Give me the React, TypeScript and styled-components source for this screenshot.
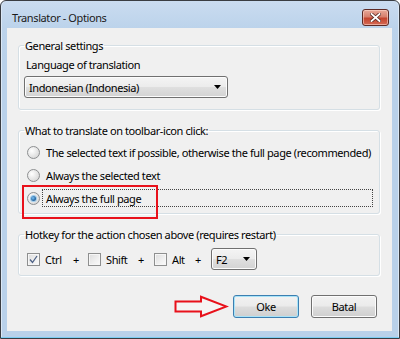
import React from "react";
import styled, { createGlobalStyle, css } from "styled-components";

const GlobalStyle = createGlobalStyle`
  html, body { margin: 0; padding: 0; background: #ffffff; }
  body { width: 400px; height: 339px; overflow: hidden; }
  * { box-sizing: border-box; }
`;

const FONT = `"Noto Sans", "Open Sans", "DejaVu Sans", sans-serif`;

const Window = styled.div`
  width: 400px;
  height: 339px;
  border: 1px solid #3a3d42;
  border-radius: 6px 6px 0 0;
  background: linear-gradient(180deg, #cadcf0 0px, #bcd3eb 27px, #b9d1ea 60px, #b9d1ea 100%);
  box-shadow: inset 0 -1px 0 #7ccdf3, inset 1px 0 0 #dbe8f6, inset -1px 0 0 #dbe8f6;
  display: flex;
  flex-direction: column;
  padding: 0 7px 7px 6px;
  font-family: ${FONT};
  font-size: 11px;
  letter-spacing: -0.4px;
  color: #000;
`;

const TitleBar = styled.div`
  height: 27px;
  display: flex;
  align-items: flex-start;
  justify-content: space-between;
  padding-left: 5px;
`;

const Title = styled.div`
  margin-top: 9px;
  line-height: 15px;
  color: #1a1a1a;
`;

const CloseButton = styled.div`
  margin-top: 8px;
  margin-right: 3px;
  width: 27px;
  height: 17px;
  border: 1px solid #5d2a25;
  border-radius: 3px;
  background: linear-gradient(180deg, #e8a898 0%, #d7806e 45%, #c4442e 55%, #d46a55 100%);
  box-shadow: inset 0 0 0 1px rgba(255, 220, 210, 0.55);
  display: flex;
  align-items: center;
  justify-content: center;
`;

const Client = styled.div`
  flex: 1;
  background: #f0f0f0;
  display: flex;
  flex-direction: column;
  padding: 10px 12px 0 11px;
`;

const Group = styled.fieldset<{ $mt?: number; $pt: number; $pb: number }>`
  margin: ${(p) => p.$mt ?? 0}px 0 0 0;
  padding: ${(p) => p.$pt}px 0 ${(p) => p.$pb}px 5px;
  border: 1px solid #d5dfe5;
  border-radius: 3px;
  box-shadow: inset 1px 1px 0 #ffffff, 1px 1px 0 #ffffff;
  min-width: 0;
  display: flex;
  flex-direction: column;
`;

const Legend = styled.legend`
  padding: 0 1px;
  margin: 0;
  line-height: 15px;
`;

const Label = styled.div`
  line-height: 15px;
  margin-left: 2px;
`;

const ComboBox = styled.div<{ $w: number; $h: number; $mt?: number }>`
  width: ${(p) => p.$w}px;
  height: ${(p) => p.$h}px;
  margin-top: ${(p) => p.$mt ?? 0}px;
  border: 1px solid #707070;
  border-radius: 3px;
  background: linear-gradient(180deg, #f4f4f4 0%, #ececec 48%, #dfdfdf 52%, #d3d3d3 100%);
  box-shadow: inset 0 0 0 1px #fcfcfc;
  display: flex;
  align-items: center;
  justify-content: space-between;
  padding: 0 6px 0 4px;
  line-height: 15px;
  flex-shrink: 0;
`;

const Arrow = () => (
  <svg width="7" height="4" viewBox="0 0 7 4">
    <path d="M0 0 H7 L3.5 4 Z" fill="#000" />
  </svg>
);

const RadioList = styled.div`
  display: flex;
  flex-direction: column;
  gap: 5px;
  padding-left: 3px;
`;

const RadioRow = styled.div<{ $marked?: boolean }>`
  position: relative;
  height: 18px;
  display: flex;
  align-items: center;
  ${(p) =>
    p.$marked &&
    css`
      &::after {
        content: "";
        position: absolute;
        left: -5px;
        top: -4px;
        width: 132px;
        height: 30px;
        border: 2px solid #e8111b;
      }
    `}
`;

const RadioCircle = styled.span<{ $checked?: boolean }>`
  width: 13px;
  height: 13px;
  border-radius: 50%;
  border: 1px solid #8d8f91;
  background: radial-gradient(circle at 35% 35%, #ffffff 0%, #e9e9e9 45%, #cfcfcf 100%);
  display: flex;
  align-items: center;
  justify-content: center;
  flex-shrink: 0;
  &::after {
    content: "";
    display: ${(p) => (p.$checked ? "block" : "none")};
    width: 5px;
    height: 5px;
    border-radius: 50%;
    background: radial-gradient(circle at 40% 40%, #7fc4f5 0%, #2c6fab 55%, #14406b 100%);
    box-shadow: 0 0 0 1px #9ecbeb;
  }
`;

const RadioText = styled.span<{ $focused?: boolean }>`
  flex: 1;
  height: 18px;
  margin-left: 2px;
  margin-right: 6px;
  padding-left: 3px;
  display: flex;
  align-items: center;
  border: 1px dotted ${(p) => (p.$focused ? "#444" : "transparent")};
  white-space: nowrap;
`;

const HotkeyRow = styled.div`
  display: flex;
  align-items: center;
  padding-left: 3px;
  height: 22px;
`;

const CheckItem = styled.div<{ $w: number }>`
  width: ${(p) => p.$w}px;
  display: flex;
  align-items: center;
  gap: 5px;
  flex-shrink: 0;
`;

const CheckBox = styled.span`
  width: 13px;
  height: 13px;
  border: 1px solid #8e8f8f;
  background: linear-gradient(135deg, #dcdcdc 0%, #f0f0f0 60%, #fbfbfb 100%);
  box-shadow: inset 0 0 0 1px #f6f6f6;
  display: flex;
  align-items: center;
  justify-content: center;
  flex-shrink: 0;
`;

const Plus = styled.span<{ $w: number }>`
  width: ${(p) => p.$w}px;
  flex-shrink: 0;
`;

const ButtonRow = styled.div`
  margin-top: 19px;
  display: flex;
  justify-content: flex-end;
  align-items: center;
  padding-right: 3px;
`;

const Button = styled.div<{ $default?: boolean; $ml: number }>`
  width: 66px;
  height: 23px;
  margin-left: ${(p) => p.$ml}px;
  border: 1px solid ${(p) => (p.$default ? "#3c7fb1" : "#707070")};
  border-radius: 3px;
  background: linear-gradient(180deg, #f2f2f2 0%, #ebebeb 48%, #dddddd 52%, #cfcfcf 100%);
  box-shadow: inset 0 0 0 1px ${(p) => (p.$default ? "#a8e3f8" : "#fcfcfc")};
  display: flex;
  align-items: center;
  justify-content: center;
  line-height: 15px;
`;

const PointerArrow = () => (
  <svg width="55" height="23" viewBox="0 0 55 23" style={{ display: "block" }}>
    <path
      d="M1.5 6.5 H27 V1.8 L52.5 11.5 L27 21.2 V16.5 H1.5 Z"
      fill="#f4f4f4"
      stroke="#e8111b"
      strokeWidth="2"
      strokeLinejoin="miter"
    />
  </svg>
);

export default function App() {
  return (
    <>
      <GlobalStyle />
      <Window>
        <TitleBar>
          <Title>Translator - Options</Title>
          <CloseButton>
            <svg width="11" height="9" viewBox="0 0 11 9">
              <path d="M1.5 1 L9.5 8 M9.5 1 L1.5 8" stroke="#5a2a24" strokeWidth="3.4" strokeLinecap="square" />
              <path d="M1.5 1 L9.5 8 M9.5 1 L1.5 8" stroke="#ffffff" strokeWidth="1.8" strokeLinecap="square" />
            </svg>
          </CloseButton>
        </TitleBar>
        <Client>
          <Group $pt={4} $pb={11}>
            <Legend>General settings</Legend>
            <Label>Language of translation</Label>
            <ComboBox $w={204} $h={22} $mt={4}>
              <span>Indonesian (Indonesia)</span>
              <Arrow />
            </ComboBox>
          </Group>
          <Group $mt={13} $pt={5} $pb={6}>
            <Legend>What to translate on toolbar-icon click:</Legend>
            <RadioList>
              <RadioRow>
                <RadioCircle />
                <RadioText>The selected text if possible, otherwise the full page (recommended)</RadioText>
              </RadioRow>
              <RadioRow>
                <RadioCircle />
                <RadioText>Always the selected text</RadioText>
              </RadioRow>
              <RadioRow $marked>
                <RadioCircle $checked />
                <RadioText $focused>Always the full page</RadioText>
              </RadioRow>
            </RadioList>
          </Group>
          <Group $mt={13} $pt={6} $pb={5}>
            <Legend>Hotkey for the action chosen above (requires restart)</Legend>
            <HotkeyRow>
              <CheckItem $w={46}>
                <CheckBox>
                  <svg width="9" height="9" viewBox="0 0 9 9">
                    <path d="M1 4.5 L3.5 7.5 L8 1" fill="none" stroke="#4d6185" strokeWidth="1.3" />
                  </svg>
                </CheckBox>
                <span>Ctrl</span>
              </CheckItem>
              <Plus $w={15}>+</Plus>
              <CheckItem $w={50}>
                <CheckBox />
                <span>Shift</span>
              </CheckItem>
              <Plus $w={16}>+</Plus>
              <CheckItem $w={41}>
                <CheckBox />
                <span>Alt</span>
              </CheckItem>
              <Plus $w={16}>+</Plus>
              <ComboBox $w={46} $h={22}>
                <span>F2</span>
                <Arrow />
              </ComboBox>
            </HotkeyRow>
          </Group>
          <ButtonRow>
            <PointerArrow />
            <Button $default $ml={4}>Oke</Button>
            <Button $ml={12}>Batal</Button>
          </ButtonRow>
        </Client>
      </Window>
    </>
  );
}
